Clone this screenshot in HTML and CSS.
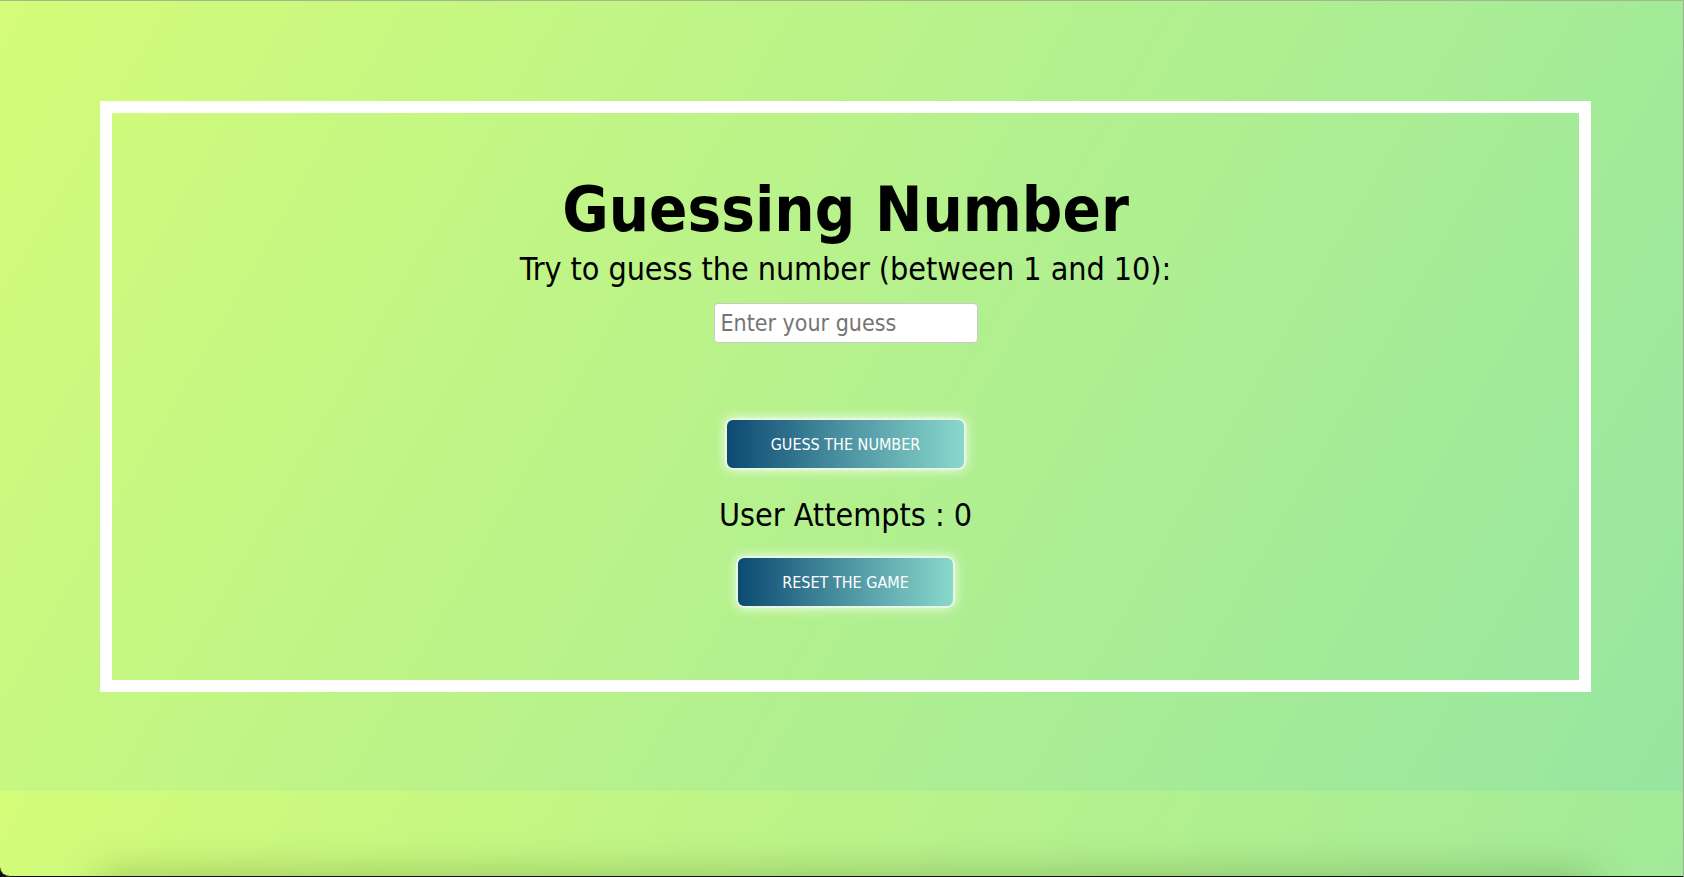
FILE: index.html
```html
<!DOCTYPE html>
<html lang="en">
<head>
<meta charset="utf-8">
<title>Guessing Number</title>
<link rel="stylesheet" href="styles.css">
</head>
<body>
  <main class="game">
    <h1 class="title">Guessing Number</h1>
    <p class="prompt">Try to guess the number (between 1 and 10):</p>
    <input class="guess-input" type="text" placeholder="Enter your guess">
    <button class="btn btn-guess" type="button">Guess the number</button>
    <p class="attempts">User Attempts : 0</p>
    <button class="btn btn-reset" type="button">Reset the game</button>
  </main>
  <div class="window-frame"><div class="window-shadow"></div></div>
</body>
</html>
```
FILE: styles.css
```css
html {
  margin: 0;
  height: 100%;
  background: linear-gradient(120deg, #d4fc79 0%, #96e6a1 100%) 0 0 / 100% 791px repeat;
}

body {
  margin: 0;
  padding: 101px 0 0 100px;
  font-family: "DejaVu Sans Condensed", "DejaVu Sans", sans-serif;
  color: #000;
}

.game {
  box-sizing: border-box;
  width: 1491px;
  border: 12px solid #fff;
  padding: 59px 0 72px;
  display: flex;
  flex-direction: column;
  align-items: center;
}

.title {
  margin: 0;
  font-size: 63px;
  line-height: 76px;
  font-weight: bold;
}

.prompt {
  margin: 2px 0 0;
  font-size: 32px;
  line-height: 38px;
  letter-spacing: -0.05px;
}

.guess-input {
  margin-top: 15px;
  box-sizing: border-box;
  width: 264px;
  height: 40px;
  padding: 0 6px;
  border: 1px solid #c9c9c9;
  border-radius: 4px;
  background: #fff;
  font-family: inherit;
  font-size: 23px;
  color: #000;
  outline: none;
}

.guess-input::placeholder {
  color: #757575;
}

.btn {
  box-sizing: border-box;
  border: 2px solid #e6f7e2;
  border-radius: 8px;
  background: linear-gradient(to right, #0c4a72 0%, #4d93a2 50%, #89d8cc 100%);
  box-shadow: 0 0 12px rgba(255, 255, 255, 0.85);
  color: #fff;
  font-family: inherit;
  font-size: 16px;
  text-transform: uppercase;
  padding: 0;
  cursor: pointer;
}

.btn-guess {
  margin-top: 75px;
  width: 241px;
  height: 52px;
}

.attempts {
  margin: 26px 0 0;
  font-size: 32px;
  line-height: 38px;
}

.btn-reset {
  margin-top: 22px;
  width: 219px;
  height: 52px;
}

.window-frame {
  position: fixed;
  inset: 0;
  box-sizing: border-box;
  border-top: 1px solid #a6b68c;
  border-right: 1px solid #9fae98;
  border-bottom: 1px solid #111;
  border-bottom-left-radius: 10px;
  box-shadow: 0 0 0 20px #111;
  pointer-events: none;
  overflow: hidden;
}

.window-shadow {
  position: absolute;
  left: 100px;
  right: 90px;
  bottom: -40px;
  height: 40px;
  box-shadow: 0 0 40px rgba(60, 90, 20, 0.35);
}
```
